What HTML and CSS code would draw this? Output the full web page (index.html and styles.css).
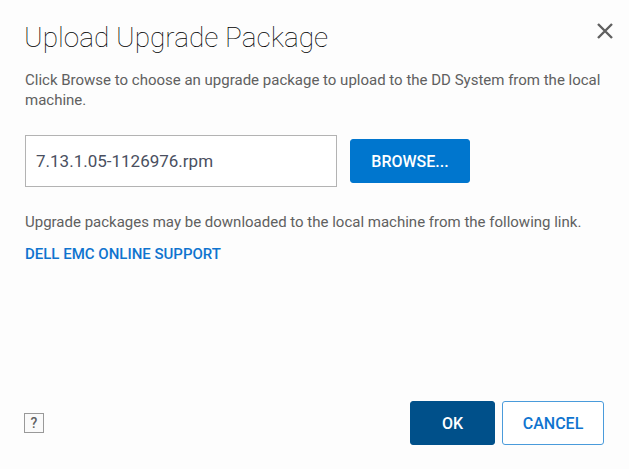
FILE: index.html
```html
<!DOCTYPE html>
<html lang="en">
<head>
    <meta charset="UTF-8">
    <title>Upload Upgrade Package</title>
    <link rel="stylesheet" href="styles.css">
</head>
<body>
    <form class="dialog">
        <div class="header">
            <h1>Upload Upgrade Package</h1>
            <button type="button" class="close" aria-label="Close">
                <svg width="16" height="16" viewBox="0 0 16 16"><path d="M1 1L15 15M15 1L1 15"/></svg>
            </button>
        </div>
        <div class="content">
            <label class="intro" for="package">Click Browse to choose an upgrade package to upload to the DD System from the local machine.</label>
            <div class="upload">
                <input type="text" id="package" value="7.13.1.05-1126976.rpm">
                <button type="button" class="btn browse">BROWSE...</button>
            </div>
            <p class="note">Upgrade packages may be downloaded to the local machine from the following link.</p>
            <a class="support" href="#">DELL EMC ONLINE SUPPORT</a>
        </div>
        <div class="footer">
            <button type="button" class="help">?</button>
            <div class="actions">
                <button type="submit" class="btn ok">OK</button>
                <button type="button" class="btn cancel">CANCEL</button>
            </div>
        </div>
    </form>
</body>
</html>
```

FILE: styles.css
```css
*{
    box-sizing: border-box;
    margin: 0;
    padding: 0;
}
body{
    background: #fdfdfd;
    color: #606060;
    font-family: Roboto, "Liberation Sans", sans-serif;
    font-size: 15px;
    line-height: 20px;
}
button, input{
    font-family: inherit;
}
.dialog{
    display: flex;
    flex-direction: column;
    min-height: 100vh;
    padding: 20px 16px 24px 24px;
}
.header{
    display: flex;
    justify-content: space-between;
    align-items: flex-start;
    margin-bottom: 15px;
}
.header h1{
    font-size: 28px;
    font-weight: 100;
    line-height: 35px;
    color: #000;
}
.close{
    width: 16px;
    height: 16px;
    margin-top: 3px;
    border: 0;
    background: none;
    cursor: pointer;
}
.close svg{
    display: block;
    fill: none;
    stroke: #606060;
    stroke-width: 2.4;
}
.content{
    padding: 0 9px 0 1px;
}
.intro{
    display: block;
}
.upload{
    display: flex;
    align-items: center;
    gap: 13px;
    margin-top: 25px;
}
.upload input{
    width: 312px;
    height: 52px;
    padding: 0 10px;
    border: 1px solid #b3b3b3;
    background: #fff;
    color: #4a4f60;
    font-size: 17px;
}
.btn{
    height: 44px;
    border: 1px solid #0076ce;
    border-radius: 3px;
    font-size: 16px;
    font-weight: 500;
    cursor: pointer;
}
.browse{
    width: 120px;
    background: #0076ce;
    color: #fff;
}
.note{
    margin-top: 25px;
}
.support{
    display: inline-block;
    margin-top: 12px;
    color: #0f74cf;
    font-weight: 500;
    text-decoration: none;
}
.footer{
    display: flex;
    justify-content: space-between;
    align-items: center;
    margin-top: auto;
    padding-right: 9px;
}
.help{
    width: 20px;
    height: 20px;
    border: 1px solid #999;
    background: #fafafa;
    color: #606060;
    font-size: 14px;
    font-weight: 500;
}
.actions{
    display: flex;
    gap: 7px;
}
.ok{
    width: 85px;
    border-color: #00508a;
    background: #00508a;
    color: #fff;
}
.cancel{
    width: 102px;
    border-color: #4a9bdb;
    background: #fff;
    color: #0f74cf;
}
```
